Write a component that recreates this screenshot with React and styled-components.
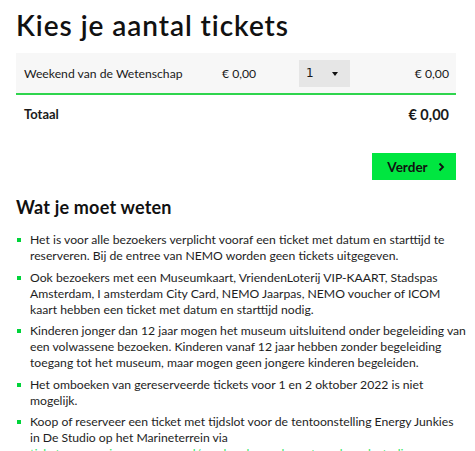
import React from "react";
import styled, { createGlobalStyle } from "styled-components";

const Global = createGlobalStyle`
  html, body { margin: 0; padding: 0; background: #fff; }
  body { font-family: Lato, "Noto Sans", sans-serif; color: #1a1a1a; overflow: hidden; }
`;

const Page = styled.div`
  width: 440px;
  padding: 0 19px 0 16px;
`;

const Title = styled.h1`
  margin: 0;
  padding-top: 9px;
  font-size: 28px;
  line-height: 32px;
  font-weight: 600;
  letter-spacing: 0.95px;
  color: #111;
`;

const Table = styled.div`
  margin-top: 12px;
`;

const Row = styled.div`
  display: grid;
  grid-template-columns: 198px 77px 70px 1fr;
  align-items: center;
  height: 40px;
  padding: 0 7px 0 8px;
  background: #f7f7f7;
  border-bottom: 2px solid #2fd54d;
  font-size: 12.2px;
`;

const TotalRow = styled.div`
  display: flex;
  justify-content: space-between;
  align-items: center;
  height: 38px;
  padding: 0 7px 0 8px;
  font-weight: 700;
  font-size: 13px;
`;

const Price = styled.span`
  text-align: ${(p) => (p.$right ? "right" : "left")};
  font-size: ${(p) => (p.$big ? "14.5px" : "12.2px")};
`;

const Select = styled.div`
  width: 51px;
  height: 27px;
  box-sizing: border-box;
  background: #e6e6e6;
  display: flex;
  align-items: center;
  justify-content: space-between;
  padding: 0 12px 0 7px;
  font-family: "DejaVu Sans", sans-serif;
  font-size: 12px;
`;

const Caret = styled.span`
  width: 0;
  height: 0;
  border-left: 3.5px solid transparent;
  border-right: 3.5px solid transparent;
  border-top: 4px solid #111;
  margin-top: 2px;
`;

const Actions = styled.div`
  display: flex;
  justify-content: flex-end;
  margin-top: 20px;
`;

const Button = styled.button`
  width: 84px;
  height: 27px;
  border: 0;
  background: #00e640;
  color: #111;
  font-family: inherit;
  font-weight: 700;
  font-size: 13.5px;
  display: flex;
  align-items: center;
  justify-content: center;
  gap: 10px;
  padding: 0 0 0 4px;
  cursor: pointer;
`;

const SubTitle = styled.h2`
  margin: 16px 0 0;
  font-size: 18px;
  line-height: 22px;
  font-weight: 700;
  letter-spacing: 0.2px;
  color: #111;
`;

const List = styled.ul`
  list-style: none;
  margin: 14px 0 0;
  padding: 0;
  width: 455px;
`;

const Item = styled.li`
  position: relative;
  padding-left: 14px;
  font-size: 12.2px;
  line-height: 16px;
  color: #1e1e1e;
  margin-bottom: 5.5px;
  &::before {
    content: "";
    position: absolute;
    left: 1px;
    top: 6px;
    width: 4px;
    height: 4px;
    background: #00d43a;
  }
`;

const Link = styled.a`
  color: #3be45f;
  text-decoration: none;
`;

function Chevron() {
  return (
    <svg width="7" height="10" viewBox="0 0 7 10" fill="none">
      <path d="M1.5 1.5L5 5L1.5 8.5" stroke="#111" strokeWidth="1.8" />
    </svg>
  );
}

export default function App() {
  return (
    <Page>
      <Global />
      <Title>Kies je aantal tickets</Title>
      <Table>
        <Row>
          <span>Weekend van de Wetenschap</span>
          <Price>€ 0,00</Price>
          <Select>
            <span>1</span>
            <Caret />
          </Select>
          <Price $right>€ 0,00</Price>
        </Row>
        <TotalRow>
          <span>Totaal</span>
          <Price $right $big>€ 0,00</Price>
        </TotalRow>
      </Table>
      <Actions>
        <Button>
          Verder <Chevron />
        </Button>
      </Actions>
      <SubTitle>Wat je moet weten</SubTitle>
      <List>
        <Item>
          Het is voor alle bezoekers verplicht vooraf een ticket met datum en starttijd te
          <br />
          reserveren. Bij de entree van NEMO worden geen tickets uitgegeven.
        </Item>
        <Item>
          Ook bezoekers met een Museumkaart, VriendenLoterij VIP-KAART, Stadspas
          <br />
          Amsterdam, I amsterdam City Card, NEMO Jaarpas, NEMO voucher of ICOM
          <br />
          kaart hebben een ticket met datum en starttijd nodig.
        </Item>
        <Item>
          Kinderen jonger dan 12 jaar mogen het museum uitsluitend onder begeleiding van
          <br />
          een volwassene bezoeken. Kinderen vanaf 12 jaar hebben zonder begeleiding
          <br />
          toegang tot het museum, maar mogen geen jongere kinderen begeleiden.
        </Item>
        <Item>
          Het omboeken van gereserveerde tickets voor 1 en 2 oktober 2022 is niet
          <br />
          mogelijk.
        </Item>
        <Item>
          Koop of reserveer een ticket met tijdslot voor de tentoonstelling Energy Junkies
          <br />
          in De Studio op het Marineterrein via
          <br />
          <Link href="#">tickets.nemosciencemuseum.nl/weekend-van-de-wetenschap-destudio</Link>
        </Item>
      </List>
    </Page>
  );
}
